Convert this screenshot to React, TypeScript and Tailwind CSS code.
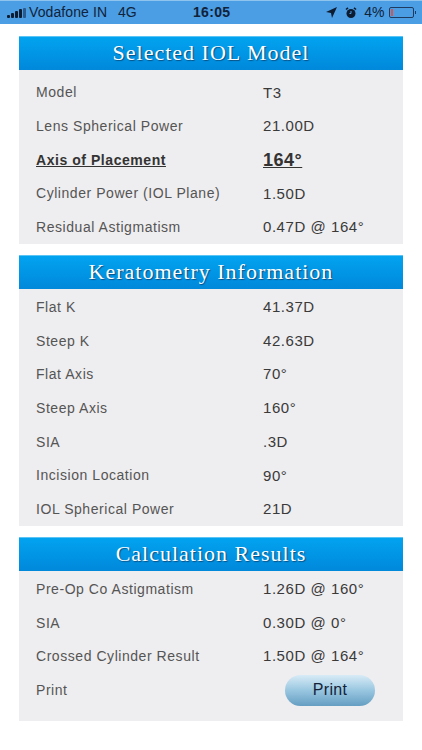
import { ReactNode } from "react";

type RowType = {
  label: ReactNode
  value: ReactNode
}

const sans = "font-['Liberation_Sans',Arial,sans-serif]"

const iolRows: RowType[] = [
  { label: "Model", value: "T3" },
  { label: "Lens Spherical Power", value: "21.00D" },
  {
    label: <span className="font-bold underline text-[#333]">Axis of Placement</span>,
    value: <span className="font-bold underline text-[18px] tracking-[0.5px] text-[#333]">164°</span>,
  },
  { label: "Cylinder Power (IOL Plane)", value: "1.50D" },
  { label: "Residual Astigmatism", value: "0.47D @ 164°" },
]

const keratometryRows: RowType[] = [
  { label: "Flat K", value: "41.37D" },
  { label: "Steep K", value: "42.63D" },
  { label: "Flat Axis", value: "70°" },
  { label: "Steep Axis", value: "160°" },
  { label: "SIA", value: ".3D" },
  { label: "Incision Location", value: "90°" },
  { label: "IOL Spherical Power", value: "21D" },
]

const resultRows: RowType[] = [
  { label: "Pre-Op Co Astigmatism", value: "1.26D @ 160°" },
  { label: "SIA", value: "0.30D @ 0°" },
  { label: "Crossed Cylinder Result", value: "1.50D @ 164°" },
]

function StatusBar() {
  return (
    <div className={`flex h-6 items-center bg-[#4b9de4] border-t border-[#8fc4ee] text-[14px] text-[#10233a] ${sans}`}>
      <div className="ml-[7px] flex items-end gap-[1px]">
        <div className="h-[3px] w-[3px] rounded-[1px] bg-[#0d1c30]" />
        <div className="h-[5px] w-[3px] rounded-[1px] bg-[#0d1c30]" />
        <div className="h-[7px] w-[3px] rounded-[1px] bg-[#0d1c30]" />
        <div className="h-[9px] w-[3px] rounded-[1px] bg-[#0d1c30]" />
        <div className="h-[10px] w-[3px] rounded-[1px] bg-[#2d5a8c]" />
      </div>
      <span className="ml-[3px] w-[89px] tracking-[0.1px]">Vodafone IN</span>
      <span className="w-[75px]">4G</span>
      <span className="font-bold tracking-[0.3px]">16:05</span>
      <svg className="ml-[96px]" width="11" height="11" viewBox="0 0 11 11">
        <path d="M11 0 L0 5 L5 6 L6 11 Z" fill="#0d1c30" />
      </svg>
      <svg className="ml-[8px]" width="12" height="12" viewBox="0 0 12 12">
        <circle cx="6" cy="6.5" r="4.5" fill="#0d1c30" />
        <path d="M1 2.5 L3 0.8 M11 2.5 L9 0.8" stroke="#0d1c30" strokeWidth="1.6" />
        <path d="M6 4 V6.5 H4.5" stroke="#4b9de4" strokeWidth="1" fill="none" />
      </svg>
      <span className="ml-[7px]">4%</span>
      <div className="ml-[4px] flex h-[11px] w-[25px] rounded-[2px] border border-[#1f3c60] p-[1px]">
        <div className="w-[2px] bg-[#d9534f]" />
      </div>
      <div className="ml-[1px] h-[3px] w-[1px] bg-[#1f3c60]" />
    </div>
  )
}

function Header({ title }: { title: string }) {
  return (
    <div className="flex h-[34px] items-center justify-center border-t border-[#5cc3f5] bg-gradient-to-b from-[#02a3f0] to-[#0188db] pb-[2px] font-['Liberation_Serif','Times_New_Roman',serif] text-[22px] tracking-[1px] text-white [text-shadow:1px_1px_1px_#0b4f80]">
      {title}
    </div>
  )
}

function Row({ label, value }: RowType) {
  return (
    <div className={`flex h-[33.7px] items-center text-[14px] tracking-[0.55px] text-[#555] ${sans}`}>
      <div className="ml-[17px] w-[227px]">{label}</div>
      <div className="text-[15px] tracking-[0.55px] text-[#3a3a3a]">{value}</div>
    </div>
  )
}

export default function App() {
  return (
    <div className="h-[750px] w-[422px] overflow-hidden bg-white">
      <StatusBar />
      <div className="mx-[19px] mt-3 flex flex-col gap-[11px]">
        <section>
          <Header title="Selected IOL Model" />
          <div className="h-[174px] bg-[#eeedef] pt-[6px]">
            {iolRows.map((row, i) => <Row key={i} {...row} />)}
          </div>
        </section>
        <section>
          <Header title="Keratometry Information" />
          <div className="h-[237px] bg-[#eeedef] pt-[1.5px]">
            {keratometryRows.map((row, i) => <Row key={i} {...row} />)}
          </div>
        </section>
        <section>
          <Header title="Calculation Results" />
          <div className="h-[150px] bg-[#eeedef] pt-[1.5px]">
            {resultRows.map((row, i) => <Row key={i} {...row} />)}
            <div className={`flex h-[33.7px] items-center text-[14px] tracking-[0.55px] text-[#555] ${sans}`}>
              <div className="ml-[17px] w-[249px]">Print</div>
              <button className="h-[31px] w-[90px] rounded-full bg-gradient-to-b from-[#d8ebf6] via-[#98c6e0] to-[#659ec2] text-[16px] tracking-[0.3px] text-[#14233a]">
                Print
              </button>
            </div>
          </div>
        </section>
      </div>
    </div>
  )
}
